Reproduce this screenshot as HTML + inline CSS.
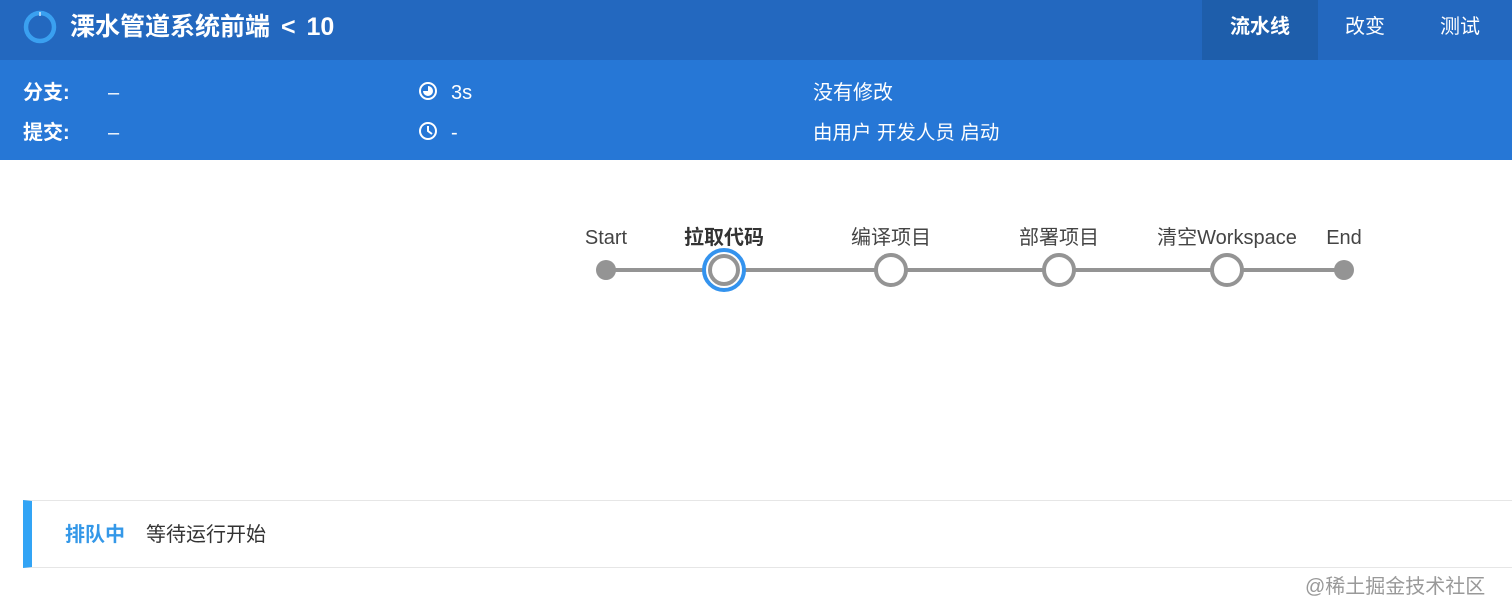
<!DOCTYPE html>
<html><head><meta charset="utf-8"><style>
*{margin:0;padding:0;box-sizing:border-box}
body{width:1512px;height:615px;background:#fff;font-family:"Liberation Sans","Noto Sans CJK SC",sans-serif;position:relative;overflow:hidden;color:#333}
.hdr{position:absolute;left:0;top:0;width:1512px;height:60px;background:#2368bf}
.sub{position:absolute;left:0;top:60px;width:1512px;height:100px;background:#2677d6;color:#fff}
.t{position:absolute;white-space:nowrap;line-height:24px;font-size:20px}
.tab{position:absolute;top:0;height:60px;line-height:54px;color:#fff;font-size:20px;text-align:center}
.lbl{position:absolute;top:226px;font-size:20px;line-height:24px;color:#444;white-space:nowrap;transform:translateX(-50%)}
</style></head><body>
<div class="hdr">
 <svg style="position:absolute;left:22px;top:9px" width="36" height="36"><circle cx="18" cy="18" r="14" fill="none" stroke="#3aa0f0" stroke-width="4.5"/><line x1="18" y1="3" x2="18" y2="7" stroke="#cfe6fb" stroke-width="1.5"/></svg>
 <div class="t" style="left:70px;top:15px;font-size:25px;font-weight:bold;color:#fff">溧水管道系统前端 <span style="margin:0 4px">&lt;</span> 10</div>
 <div class="tab" style="left:1202px;width:116px;background:#1e5eab;font-weight:bold">流水线</div>
 <div class="tab" style="left:1330px;width:70px">改变</div>
 <div class="tab" style="left:1425px;width:70px">测试</div>
</div>
<div class="sub">
 <div class="t" style="left:23px;top:21px;font-weight:bold">分支:</div>
 <div class="t" style="left:108px;top:21px">–</div>
 <div class="t" style="left:23px;top:61px;font-weight:bold">提交:</div>
 <div class="t" style="left:108px;top:61px">–</div>
 <svg style="position:absolute;left:418px;top:21px" width="20" height="20"><circle cx="10" cy="10" r="8" fill="none" stroke="#fff" stroke-width="2"/><path d="M10 5 A5 5 0 1 1 5 10 L10 10Z" fill="#fff"/></svg>
 <div class="t" style="left:451px;top:21px">3s</div>
 <svg style="position:absolute;left:418px;top:61px" width="20" height="20"><circle cx="10" cy="10" r="8" fill="none" stroke="#fff" stroke-width="2"/><path d="M10 5 V10 L14 13" fill="none" stroke="#fff" stroke-width="2"/></svg>
 <div class="t" style="left:451px;top:61px">-</div>
 <div class="t" style="left:813px;top:21px">没有修改</div>
 <div class="t" style="left:813px;top:61px;font-size:19.5px">由用户 开发人员 启动</div>
</div>
<svg style="position:absolute;left:0;top:0" width="1512" height="320">
 <line x1="606" y1="270" x2="1344" y2="270" stroke="#949494" stroke-width="4"/>
 <circle cx="606" cy="270" r="10" fill="#949494"/>
 <circle cx="1344" cy="270" r="10" fill="#949494"/>
 <circle cx="724" cy="270" r="20" fill="#fff" stroke="#3493ee" stroke-width="4"/>
 <circle cx="724" cy="270" r="14" fill="#fff" stroke="#949494" stroke-width="4"/>
 <circle cx="891" cy="270" r="15" fill="#fff" stroke="#949494" stroke-width="4"/>
 <circle cx="1059" cy="270" r="15" fill="#fff" stroke="#949494" stroke-width="4"/>
 <circle cx="1227" cy="270" r="15" fill="#fff" stroke="#949494" stroke-width="4"/>
</svg>
<div class="lbl" style="left:606px">Start</div>
<div class="lbl" style="left:724px;font-weight:bold;color:#333">拉取代码</div>
<div class="lbl" style="left:891px">编译项目</div>
<div class="lbl" style="left:1059px">部署项目</div>
<div class="lbl" style="left:1227px">清空Workspace</div>
<div class="lbl" style="left:1344px">End</div>
<div style="position:absolute;left:23px;top:500px;width:1489px;height:68px;border-top:1px solid #e6e6e6;border-bottom:1px solid #e6e6e6;border-left:9px solid #32a4f5"></div>
<div class="t" style="left:65px;top:523px;font-weight:bold;color:#3498e8">排队中</div>
<div class="t" style="left:146px;top:523px;color:#333">等待运行开始</div>
<div class="t" style="left:1305px;top:575px;color:#999">@稀土掘金技术社区</div>
</body></html>
